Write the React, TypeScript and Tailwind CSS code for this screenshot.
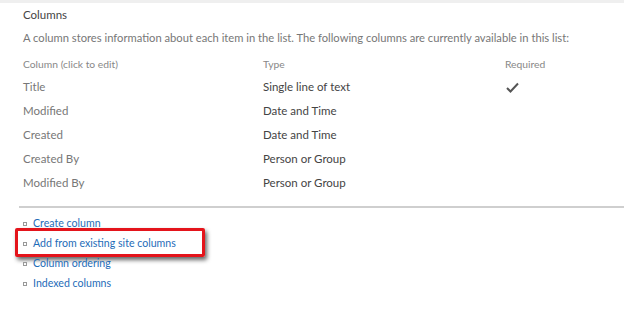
import React from "react";

const font = { fontFamily: 'Lato, "Open Sans", sans-serif' };

const rows = [
  { name: "Title", type: "Single line of text", required: true },
  { name: "Modified", type: "Date and Time", required: false },
  { name: "Created", type: "Date and Time", required: false },
  { name: "Created By", type: "Person or Group", required: false },
  { name: "Modified By", type: "Person or Group", required: false },
];

const links = [
  "Create column",
  "Add from existing site columns",
  "Column ordering",
  "Indexed columns",
];

const Check = () => (
  <svg width="13" height="11" viewBox="0 0 13 11" className="ml-[1px]">
    <path d="M1 6 L4.5 9.5 L12 1.5" fill="none" stroke="#555" strokeWidth="2" />
  </svg>
);

export default function App() {
  return (
    <div className="w-[624px] h-[309px] bg-white overflow-hidden" style={font}>
      <div className="h-[3px] bg-[#efefef]" />
      <div className="pl-[23px] pt-[3px]">
        <h2 className="text-[11.5px] leading-[18px] text-[#444]">Columns</h2>
        <p className="mt-[6px] text-[11.2px] leading-[16px] text-[#777]">
          A column stores information about each item in the list. The following columns are currently available in this list:
        </p>
        <div className="mt-[10px] grid grid-cols-[240px_242px_1fr] text-[10.3px] leading-[16px] text-[#888]">
          <span>Column (click to edit)</span>
          <span>Type</span>
          <span>Required</span>
        </div>
        <div className="mt-[3px] flex flex-col">
          {rows.map((r) => (
            <div
              key={r.name}
              className="grid grid-cols-[240px_242px_1fr] h-[24px] items-center text-[11.5px]"
            >
              <span className="text-[#777]">{r.name}</span>
              <span className="text-[#444]">{r.type}</span>
              <span>{r.required ? <Check /> : null}</span>
            </div>
          ))}
        </div>
      </div>
      <div className="ml-[19px] mt-[11px] border-t-2 border-[#cfcfcf]" />
      <ul className="pl-[23px] mt-[6px] flex flex-col">
        {links.map((l, i) => (
          <li key={l} className="relative flex items-center h-[20px]">
            <span className="w-[4px] h-[4px] border border-[#999] mr-[6px]" />
            <a className="text-[10.6px] text-[#1e6cb8]">{l}</a>
            {i === 1 && (
              <div className="absolute left-[-8px] top-[-6px] w-[190px] h-[29px] border-[3px] border-[#e4141b] rounded-[2px] shadow-[2px_3px_4px_rgba(0,0,0,0.6)]" />
            )}
          </li>
        ))}
      </ul>
    </div>
  );
}
